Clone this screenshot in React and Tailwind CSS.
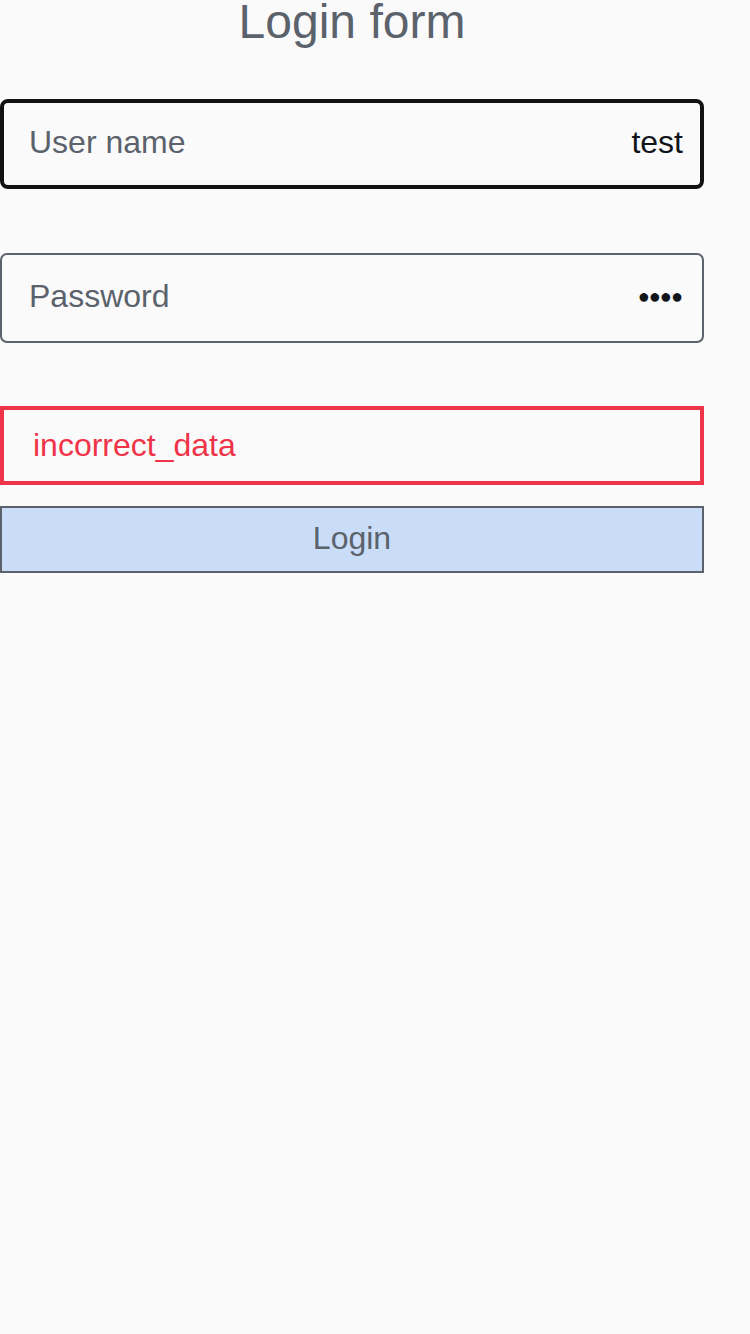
export default function App() {
  return (
    <div className="min-h-screen bg-[#fafafa] font-['Liberation_Sans',Arial,sans-serif]">
      <div className="w-[704px] flex flex-col">
        {/* Title */}
        <h1 className="text-center text-[48px] leading-[44px] text-[#5b626c]">Login form</h1>

        {/* User name */}
        <div className="mt-[55px] h-[90px] border-4 border-[#121212] rounded-[8px] flex items-center justify-between pl-[25px] pr-[17px] pb-[5px] text-[32px]">
          <span className="text-[#5b626c]">User name</span>
          <span className="text-[#111418]">test</span>
        </div>

        {/* Password */}
        <div className="mt-[64px] h-[90px] border-2 border-[#5b626c] rounded-[7px] flex items-center justify-between pl-[27px] pr-[20px] pb-[5px] text-[32px]">
          <span className="text-[#5b626c]">Password</span>
          <span className="text-[#111418] text-[20px] tracking-[-1px]">●●●●</span>
        </div>

        {/* Error */}
        <div className="mt-[63px] h-[79px] border-4 border-[#ef3348] flex items-center pl-[29px] pb-[1px] text-[32px] text-[#ef3348]">
          incorrect_data
        </div>

        {/* Button */}
        <button className="mt-[21px] h-[67px] border-2 border-[#5b626c] bg-[#c9ddf8] text-[32px] text-[#5b626c] flex items-center justify-center pb-[3px]">
          Login
        </button>
      </div>
    </div>
  );
}
